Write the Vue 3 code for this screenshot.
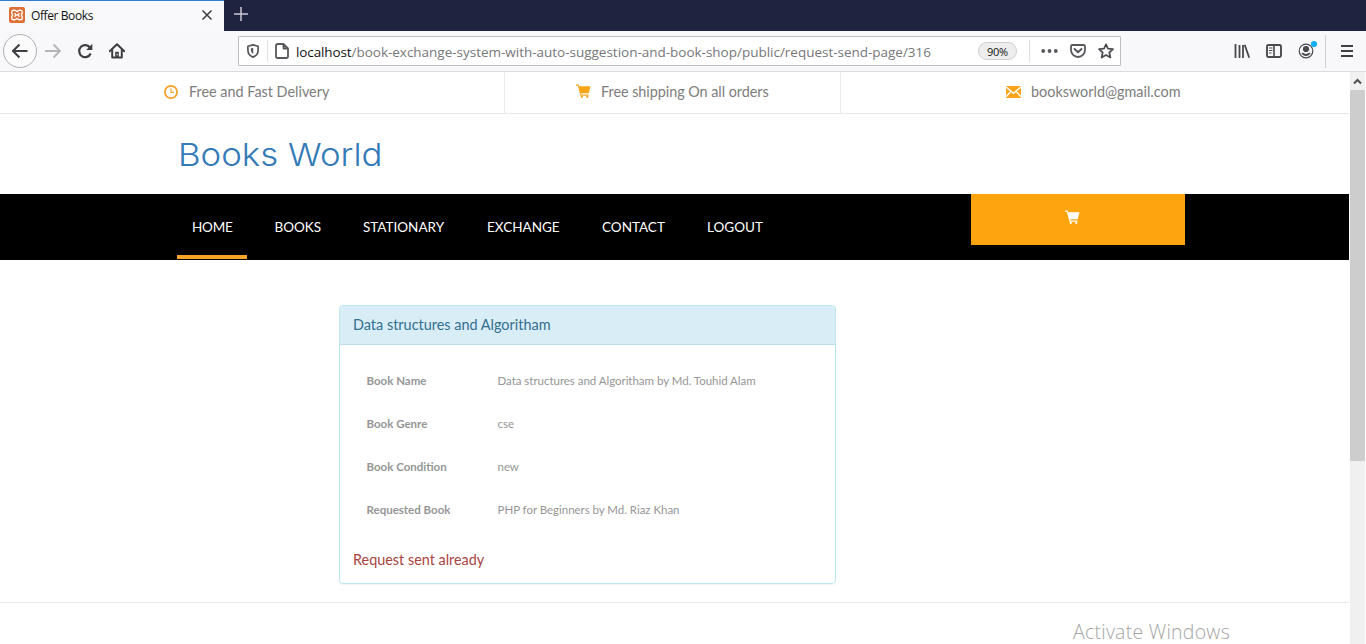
<script setup>
const nav = [
  { label: 'HOME', width: 40, active: true },
  { label: 'BOOKS', width: 46.5 },
  { label: 'STATIONARY', width: 82 },
  { label: 'EXCHANGE', width: 73 },
  { label: 'CONTACT', width: 63 },
  { label: 'LOGOUT', width: 56 },
]
const details = [
  ['Book Name', 'Data structures and Algoritham by Md. Touhid Alam'],
  ['Book Genre', 'cse'],
  ['Book Condition', 'new'],
  ['Requested Book', 'PHP for Beginners by Md. Riaz Khan'],
]
</script>

<template>
  <div class="window">
    <div class="tabs">
      <div class="tab">
        <svg class="favicon" width="16" height="16" viewBox="0 0 16 16">
          <rect width="16" height="16" rx="2" fill="#de6f35" />
          <path d="M4.500 3.200H6L8 4.600L10 3.200H11.500Q13.200 3.200 13.200 5V6.500L12.300 8L13.200 9.500V11Q13.200 12.800 11.500 12.800H10L8 11.400L6 12.800H4.500Q2.800 12.800 2.800 11V9.500L3.700 8L2.800 6.500V5Q2.800 3.200 4.500 3.200Z" fill="none" stroke="#fff" stroke-width="1.400" stroke-linejoin="round" />
          <path d="M5.500 6L6.800 8L5.500 10M10.500 6L9.200 8L10.500 10M6.800 8H9.200" fill="none" stroke="#fff" stroke-width="1.300" />
        </svg>
        <span class="tab-title">Offer Books</span>
        <svg class="tab-close" width="12" height="12" viewBox="0 0 12 12"><path d="M1.500 1.500L10.500 10.500M10.500 1.500L1.500 10.500" stroke="#3c3c40" stroke-width="1.500" /></svg>
      </div>
      <svg class="new-tab" width="14" height="14" viewBox="0 0 14 14"><path d="M7 0V14M0 7H14" stroke="#c9c9d3" stroke-width="1.500" /></svg>
    </div>

    <div class="toolbar">
      <div class="back">
        <svg width="16" height="16" viewBox="0 0 16 16"><path d="M15.500 8H1.500M7.500 1.500L1 8L7.500 14.500" fill="none" stroke="#3f3f43" stroke-width="2" /></svg>
      </div>
      <svg class="forward" width="16" height="16" viewBox="0 0 16 16"><path d="M0 8H14.500M8.500 1.500L15 8L8.500 14.500" fill="none" stroke="#b5b5b8" stroke-width="1.800" /></svg>
      <svg class="reload" width="16" height="16" viewBox="0 0 16 16"><path d="M13.200 4.800A6 6 0 1 0 13.700 10.500" fill="none" stroke="#3f3f43" stroke-width="2.200" /><path d="M15.300 .800V7H9.200Z" fill="#3f3f43" /></svg>
      <svg class="home" width="16" height="16" viewBox="0 0 16 16"><path d="M.700 8.300L8 1.200L15.300 8.300M3.200 7V14.500H12.800V7" fill="none" stroke="#3f3f43" stroke-width="2" stroke-linejoin="round" stroke-linecap="round" /><path d="M6.200 14V8.800H9.800V14Z" fill="#3f3f43" /><rect x="7.700" y="10.800" width="1" height="1.500" fill="#fff" /></svg>

      <div class="urlbar">
        <svg class="shield" width="12" height="14" viewBox="0 0 12 14"><path d="M6 .900L11.100 2.200V6C11.100 9.500 9 12 6 13.100C3 12 .900 9.500 .900 6V2.200Z" fill="none" stroke="#58585c" stroke-width="1.700" stroke-linejoin="round" /><path d="M6.200 3.800V10C4.300 8.800 3.700 7.300 3.700 4.500Z" fill="#58585c" /></svg>
        <i class="url-line"></i>
        <svg class="page-icon" width="14" height="16" viewBox="0 0 14 16"><path d="M3 1H8.500L13 5.500V13.200Q13 15 11.200 15H2.800Q1 15 1 13.200V2.800Q1 1 3 1ZM8.500 1V5.500H13" fill="none" stroke="#58585c" stroke-width="1.800" stroke-linejoin="round" /></svg>
        <span class="url"><b>localhost</b>/book-exchange-system-with-auto-suggestion-and-book-shop/public/request-send-page/316</span>
        <span class="percent">90%</span>
        <i class="url-line second"></i>
        <svg class="dots" width="17" height="4" viewBox="0 0 17 4"><circle cx="2.200" cy="2" r="1.900" /><circle cx="8.500" cy="2" r="1.900" /><circle cx="14.800" cy="2" r="1.900" /></svg>
        <svg class="pocket" width="16" height="14" viewBox="0 0 16 14"><path d="M2.500 1H13.500Q15 1 15 2.500V6A7 7 0 0 1 1 6V2.500Q1 1 2.500 1Z" fill="none" stroke="#58585c" stroke-width="1.800" /><path d="M4.500 5L8 8.300L11.500 5" fill="none" stroke="#58585c" stroke-width="2" stroke-linecap="round" stroke-linejoin="round" /></svg>
        <svg class="star" width="16" height="16" viewBox="0 0 16 16"><path d="M8 1.300L10 5.700L15 6.200L11.300 9.500L12.400 14.500L8 12L3.600 14.500L4.700 9.500L1 6.200L6 5.700Z" fill="none" stroke="#4c4c50" stroke-width="1.700" stroke-linejoin="round" /></svg>
      </div>

      <svg class="library" width="16" height="14" viewBox="0 0 16 14"><path d="M1.500 0V14M5.500 1V14M9 1V14M10.700 .700L15.200 13.600" fill="none" stroke="#4a4a4e" stroke-width="1.800" /></svg>
      <svg class="sidebar" width="16" height="14" viewBox="0 0 16 14"><rect x="1" y="1" width="14" height="12" rx="1.500" fill="none" stroke="#4a4a4e" stroke-width="1.900" /><path d="M8 1V13" stroke="#4a4a4e" stroke-width="1.600" /><path d="M3 4H6.500M3 6.500H6.500M3 9H5.500" stroke="#4a4a4e" /></svg>
      <svg class="account" width="20" height="20" viewBox="0 0 20 20"><circle cx="8" cy="11" r="6.800" fill="none" stroke="#4a4a4e" stroke-width="1.200" /><circle cx="8" cy="9" r="3.100" fill="#4a4a4e" /><path d="M3.500 13.200C5 11.800 6.500 14 8 14S11 11.800 12.500 13.200C11.500 15 10 16 8 16S4.500 15 3.500 13.200Z" fill="#4a4a4e" /><circle cx="16" cy="4" r="3.100" fill="#12aef2" /></svg>
      <i class="tool-line"></i>
      <svg class="burger" width="12" height="12" viewBox="0 0 12 12"><path d="M0 1H12M0 6H12M0 11H12" stroke="#3f3f43" stroke-width="1.800" /></svg>
    </div>

    <div class="viewport">
      <main class="page">
        <div class="topbar">
          <div class="perk first">
            <svg width="14" height="14" viewBox="0 0 14 14"><circle cx="7" cy="7" r="6.100" fill="none" stroke="#f2a32b" stroke-width="1.800" /><path d="M7 3.500V7.400H10" fill="none" stroke="#f2a32b" stroke-width="1.200" /></svg>
            <span>Free and Fast Delivery</span>
          </div>
          <div class="perk middle">
            <svg width="15" height="15" viewBox="0 0 15 15"><path d="M0 .500H2.600L3.200 2.300H14.500L12.700 9.300H5L5.500 10.500H12.500V11.700H4.500L1.900 1.700H0Z" fill="#f9a51a" /><circle cx="5.800" cy="12.900" r="1.100" fill="#f9a51a" /><circle cx="11.300" cy="12.900" r="1.100" fill="#f9a51a" /></svg>
            <span>Free shipping On all orders</span>
          </div>
          <div class="perk last">
            <svg width="15" height="12" viewBox="0 0 15 12"><rect width="15" height="12" fill="#f9a51a" /><path d="M0 .800L7.500 7.300L15 .800M0 10.700L4.800 5.500M15 10.700L10.200 5.500" fill="none" stroke="#fff" stroke-width="1.300" /></svg>
            <span>booksworld@gmail.com</span>
          </div>
        </div>

        <header class="brand"><span>Books World</span></header>

        <nav class="nav">
          <a v-for="n in nav" :key="n.label" class="nav-item" :class="{ active: n.active }">
            <span :style="{ width: n.width + 'px' }">{{ n.label }}</span>
          </a>
          <div class="cart">
            <svg width="15" height="15" viewBox="0 0 15 15"><path d="M0 .500H2.600L3.200 2.300H14.500L12.700 9.300H5L5.500 10.500H12.500V11.700H4.500L1.900 1.700H0Z" fill="#fff" /><circle cx="5.800" cy="12.900" r="1.100" fill="#fff" /><circle cx="11.300" cy="12.900" r="1.100" fill="#fff" /></svg>
          </div>
        </nav>

        <section class="panel">
          <h3>Data structures and Algoritham</h3>
          <dl>
            <div v-for="d in details" :key="d[0]" class="row">
              <dt>{{ d[0] }}</dt>
              <dd>{{ d[1] }}</dd>
            </div>
          </dl>
          <p>Request sent already</p>
        </section>

        <footer class="footer"><span>Activate Windows</span></footer>
      </main>
      <div class="scrollbar">
        <svg width="15" height="18" viewBox="0 0 15 18"><path d="M4 11.500L7.500 8L11 11.500" fill="none" stroke="#505050" stroke-width="2" /></svg>
        <div class="thumb"></div>
      </div>
    </div>
  </div>
</template>

<style>
body { overflow: hidden; }
</style>

<style scoped>
* { box-sizing: border-box; }
svg, i { flex: none; display: block; }
.window { width: 1366px; height: 644px; overflow: hidden; background: #fff; display: flex; flex-direction: column; font-family: Lato, sans-serif; white-space: nowrap; }
.tabs { height: 31px; flex: none; background: #202340; display: flex; align-items: flex-start; }
.tab { width: 224px; height: 31px; background: #f9f9fb; border-top: 1px solid #2f7bd0; display: flex; align-items: center; padding: 0 11px 1px 9px; }
.favicon { margin-bottom: 1px; }
.tab-title { margin-left: 6px; font: 12px/16px "Open Sans", sans-serif; color: #111; letter-spacing: -.4px; }
.tab-close { margin: 0 0 2px auto; }
.new-tab { margin: 7px 0 0 10px; }
.toolbar { height: 41px; flex: none; background: #f8f8fa; border-bottom: 1px solid #dcdcdf; display: flex; align-items: center; }
.back { flex: none; width: 34px; height: 34px; margin-left: 3px; border: 1px solid #b0b0b2; border-radius: 50%; display: flex; align-items: center; justify-content: center; background: #fbfbfc; }
.forward { margin-left: 8px; }
.reload { margin-left: 16px; }
.home { margin-left: 16px; }
.urlbar { flex: none; width: 883px; height: 30px; margin-left: 113px; border: 1px solid #bebec1; background: #fff; display: flex; align-items: center; border-radius: 1px; }
.shield { margin-left: 8px; }
.url-line { width: 1px; height: 22px; background: #e1e1e4; margin: 0 7px 0 8px; }
.url { margin: 1px 0 0 7px; width: 682px; font: 13.5px/20px "Open Sans", sans-serif; color: #77777b; letter-spacing: -.015px; }
.url b { font-weight: 400; color: #111; letter-spacing: -.12px; }
.percent { width: 39px; height: 18px; border: 1px solid #cecece; border-radius: 9px; background: #eee; text-align: center; font: 11px/17px "Open Sans", sans-serif; color: #111; letter-spacing: -.3px; }
.url-line.second { margin: 0 11px 0 12px; }
.dots { fill: #58585c; }
.pocket { margin-left: 12px; }
.star { margin-left: 12px; }
.library { margin-left: 113px; }
.sidebar { margin-left: 16px; }
.account { margin: 0 0 2px 16px; }
.tool-line { width: 1px; height: 33px; background: #d0d0d3; margin-left: 7px; }
.burger { margin-left: 15px; }
.viewport { flex: 1; display: flex; min-height: 0; }
.page { width: 1350px; flex: none; display: flex; flex-direction: column; padding-right: 1px; }
.topbar { height: 42px; flex: none; border-bottom: 1px solid #e8e8e8; display: flex; color: #7d7d7d; font-size: 14.4px; }
.perk { display: flex; align-items: center; padding-bottom: 2px; }
.first { width: 505px; border-right: 1px solid #ebebeb; padding-left: 164px; gap: 11px; }
.middle { width: 336px; border-right: 1px solid #ebebeb; padding-left: 71px; gap: 10px; letter-spacing: -.04px; }
.last { padding-left: 165px; gap: 10px; }
.brand { height: 80px; flex: none; padding: 19px 0 0 178px; font: 350 31.500px/43px Inter, sans-serif; color: #337ab7; }
.brand span { display: inline-block; transform: scaleX(1.105); transform-origin: left; }
.nav { height: 66px; flex: none; background: #000; display: flex; padding-left: 177px; gap: 12px; font-size: 13.5px; color: #fff; }
.nav-item { padding: 0 15px; line-height: 66px; border-bottom: 4px solid transparent; height: 65px; }
.nav-item.active { border-color: #f7a425; letter-spacing: -.2px; margin-right: .5px; }
.nav-item span { display: block; }
.cart { width: 214px; height: 51px; margin: 0 164px 0 auto; background: #fea40f; display: flex; justify-content: center; padding: 16px 11px 0 0; }
.panel { width: 497px; height: 279px; flex: none; margin: 45px 0 0 339px; border: 1px solid #bce8f1; border-radius: 4px; box-shadow: 0 1px 1px rgba(0,0,0,.05); }
h3 { margin: 0; height: 39px; background: #d9edf7; border-bottom: 1px solid #bcdfeb; color: #31708f; font-size: 14.45px; font-weight: 400; line-height: 38px; padding-left: 13px; border-radius: 3px 3px 0 0; }
dl { margin: 14px 0 0; padding-left: 26.5px; font-size: 11.5px; line-height: 43px; color: #969696; }
.row { display: flex; height: 43px; }
dt { width: 131px; font-weight: 700; }
dd { margin: 0; letter-spacing: -.03px; }
.panel p { margin: 19px 0 0 13px; font-size: 14.4px; line-height: 20px; color: #a94442; }
.footer { margin-top: 18px; flex: 1; border-top: 1px solid #e9e9e9; padding: 16px 0 0 1073px; font: 300 19.5px/25px "Open Sans", sans-serif; color: #a6a6a6; letter-spacing: .25px; }
.footer span { display: block; height: 25px; }
.scrollbar { width: 15px; background: #f0f0f0; }
.thumb { height: 371px; background: #cdcdcd; }
</style>
